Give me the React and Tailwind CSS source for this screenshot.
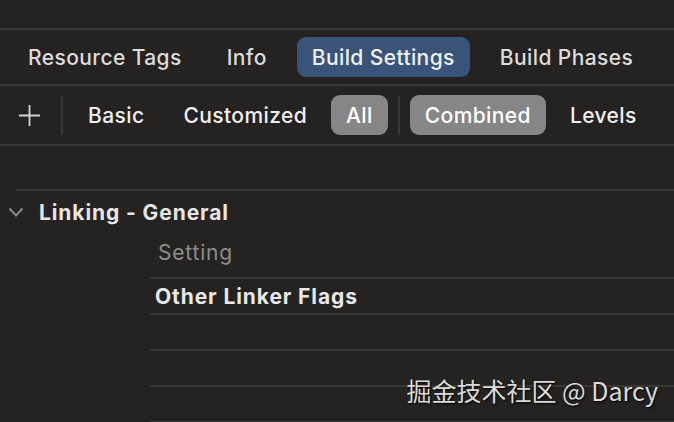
import React from "react";

const Line = ({ inset = 0 }) => (
  <div className="h-[2px] bg-[#393836]" style={{ marginLeft: inset }} />
);

const tabs = ["Resource Tags", "Info", "Build Settings", "Build Phases"];
const filters = ["Basic", "Customized", "All"];

const App = () => {
  return (
    <div className="relative w-[674px] h-[422px] overflow-hidden bg-[#242321] font-['Inter',sans-serif] text-[21px] font-medium tracking-[0.4px] leading-none">
      {/* window top strip */}
      <div className="h-[28px]" />
      <Line />

      {/* tabs */}
      <div className="flex items-center h-[54px] pl-[13px] gap-[15px] text-[#dcdcdc]">
        {tabs.map((t) => (
          <div
            key={t}
            className={
              t === "Build Settings"
                ? "h-[40px] px-[15px] flex items-center rounded-[9px] bg-[#3a5479] text-[#eef1f5] whitespace-nowrap"
                : "h-[40px] px-[15px] flex items-center whitespace-nowrap"
            }
          >
            {t}
          </div>
        ))}
      </div>
      <Line />

      {/* toolbar */}
      <div className="flex items-center h-[58px] pl-[19px] text-[#f0f0f0]">
        <svg width="21" height="21" viewBox="0 0 21 21" className="shrink-0">
          <path d="M10.5 0v21M0 10.5h21" stroke="#d4d4d4" strokeWidth="1.8" />
        </svg>
        <div className="ml-[21px] mr-[10px] w-[2px] h-[39px] bg-[#3a3937]" />
        <div className="flex items-center gap-[9px]">
          {filters.map((f) => (
            <div
              key={f}
              className={
                f === "All"
                  ? "h-[40px] px-[15px] flex items-center rounded-[9px] bg-[#868686] text-white"
                  : "h-[40px] px-[15px] flex items-center"
              }
            >
              {f}
            </div>
          ))}
        </div>
        <div className="mx-[10px] w-[2px] h-[39px] bg-[#3a3937]" />
        <div className="flex items-center gap-[9px]">
          <div className="h-[40px] px-[15px] flex items-center rounded-[9px] bg-[#868686] text-white">
            Combined
          </div>
          <div className="h-[40px] px-[15px] flex items-center">Levels</div>
        </div>
      </div>
      <Line />

      {/* settings table */}
      <div className="h-[43px]" />
      <Line inset={16} />
      <div className="flex items-center h-[42px] pl-[8px] font-bold tracking-[0.9px] text-[#e6e6e6]">
        <svg width="16" height="10" viewBox="0 0 16 10" className="shrink-0">
          <path d="M1.5 1.5l6.5 7 6.5-7" fill="none" stroke="#8a8a88" strokeWidth="2" />
        </svg>
        <span className="ml-[15px]">Linking - General</span>
      </div>
      <div className="flex items-center h-[44px] pb-[6px] pl-[158px] font-normal tracking-[0.8px] text-[#8d8d8b]">Setting</div>
      <Line inset={150} />
      <div className="flex items-center h-[34px] pl-[155px] font-bold tracking-[0.9px] text-[#e8e8e8]">Other Linker Flags</div>
      <Line inset={150} />
      <div className="h-[34px]" />
      <Line inset={150} />
      <div className="h-[34px]" />
      <Line inset={150} />
      <div className="h-[34px]" />
      <Line inset={150} />

      {/* watermark */}
      <div className="absolute right-[16px] top-[378px] font-['Noto_Sans_CJK_SC','Noto_Sans',sans-serif] text-[25px] font-normal tracking-normal leading-none text-[#dadada] [text-shadow:1px_1px_2px_#000]">
        掘金技术社区 @ Darcy
      </div>
    </div>
  );
};

export default App;
